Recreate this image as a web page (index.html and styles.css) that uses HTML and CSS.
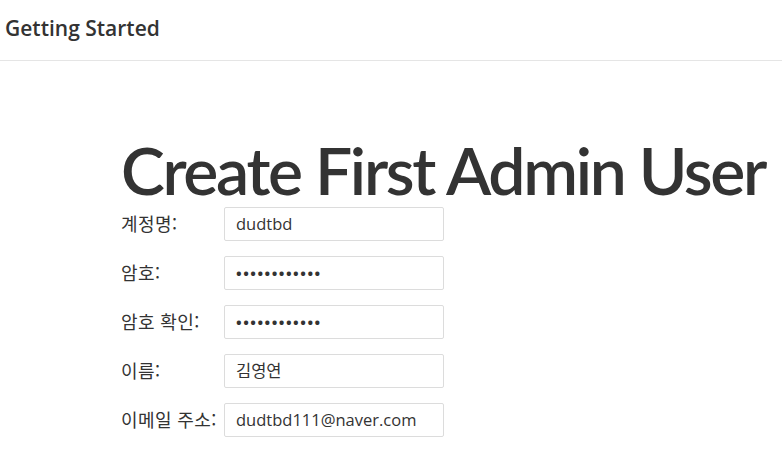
FILE: index.html
```html
<!DOCTYPE html>
<html lang="ko">
<head>
<meta charset="utf-8">
<link rel="stylesheet" href="styles.css">
</head>
<body>
<header class="topbar"><h2 class="topbar-title">Getting Started</h2></header>
<main class="content">
  <h1 class="page-title">Create First Admin User</h1>
  <form class="form">
    <div class="row"><label class="label">계정명:</label><div class="input">dudtbd</div></div>
    <div class="row"><label class="label">암호:</label><div class="input dots">••••••••••••</div></div>
    <div class="row"><label class="label">암호 확인:</label><div class="input dots">••••••••••••</div></div>
    <div class="row"><label class="label">이름:</label><div class="input">김영연</div></div>
    <div class="row"><label class="label">이메일 주소:</label><div class="input">dudtbd111@naver.com</div></div>
  </form>
</main>
</body>
</html>
```
FILE: styles.css
```css
html, body { margin: 0; padding: 0; background: #fff; }
body { font-family: "Open Sans", "Noto Sans CJK KR", sans-serif; color: #333; overflow: hidden; }
.topbar { height: 61px; border-bottom: 1px solid #e5e5e5; display: flex; align-items: center; padding-left: 5px; padding-bottom: 5px; box-sizing: border-box; }
.topbar-title { margin: 0; font-size: 21px; font-weight: 600; color: #333; letter-spacing: 0; line-height: 28px; }
.content { padding-left: 121px; padding-top: 70px; }
.page-title { margin: 0; font-family: "Lato", "Open Sans", sans-serif; font-size: 66px; font-weight: 600; line-height: 78px; letter-spacing: -2.3px; color: #333; white-space: nowrap; }
.form { display: flex; flex-direction: column; gap: 15px; margin-top: -2px; }
.row { display: flex; align-items: flex-start; }
.label { width: 103px; font-family: "Noto Sans CJK KR", "Open Sans", sans-serif; font-size: 18px; color: #333; line-height: 20px; padding-top: 6px; white-space: nowrap; letter-spacing: 0.4px; }
.input { width: 220px; height: 34px; box-sizing: border-box; border: 1px solid #dcdcdc; border-radius: 2px; padding: 0 11px; font-size: 16.5px; line-height: 32px; color: #333; font-family: "Open Sans", "Noto Sans CJK KR", sans-serif; }
.dots { font-size: 15px; letter-spacing: 1.5px; font-weight: 700; }
```
